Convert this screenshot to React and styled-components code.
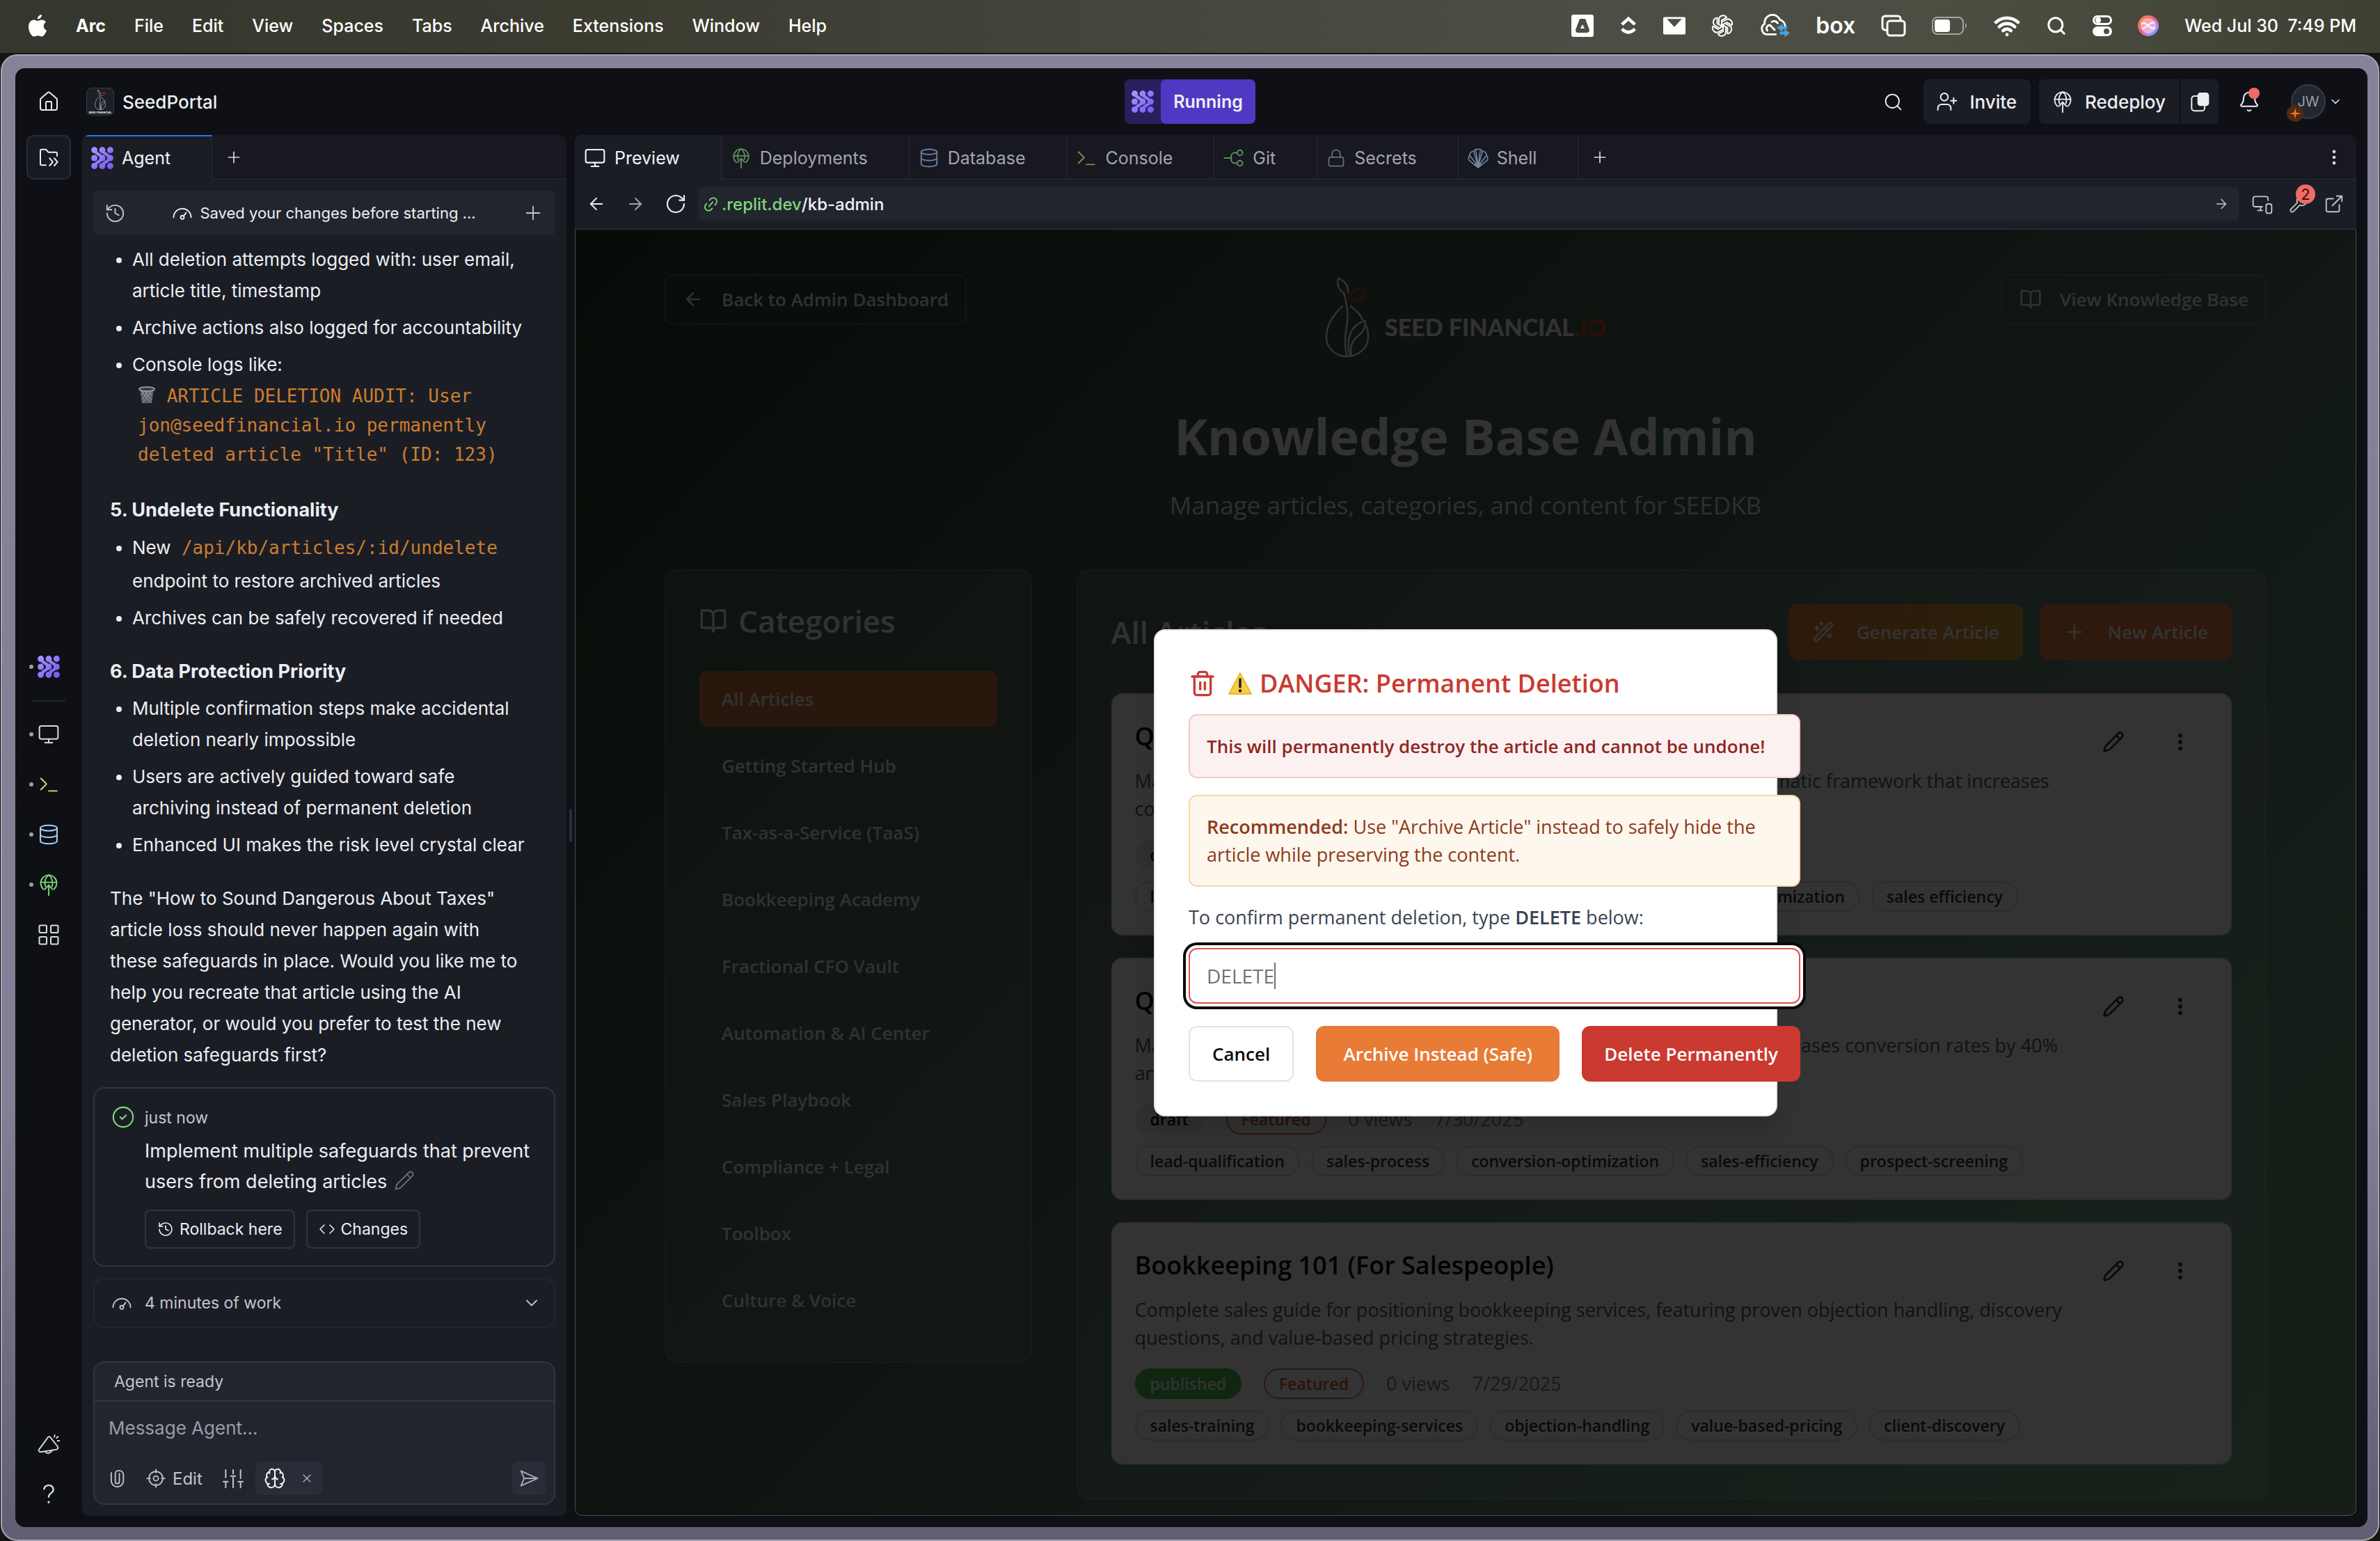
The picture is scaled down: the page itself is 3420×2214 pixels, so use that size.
import React from "react";
import styled, { createGlobalStyle, css } from "styled-components";
import {
  House, Search, UserPlus, Bell, ChevronDown, Plus, EllipsisVertical, ArrowLeft, ArrowRight,
  RotateCw, Link2, MonitorSmartphone, Wrench, ExternalLink, Monitor, Database, Lock, History,
  Pencil, Brain, X, Trash2, BookOpen, WandSparkles, LayoutGrid, Wifi, CircleCheck,
} from "lucide-react";

const ui = `Inter, "Liberation Sans", sans-serif`;
const page = `"Open Sans", "Noto Sans", sans-serif`;
const mono = `"DejaVu Sans Mono", "Liberation Mono", monospace`;

const Global = createGlobalStyle`
  *, *::before, *::after { box-sizing: border-box; }
  body { margin: 0; background: #15160f; font-family: ${ui}; -webkit-font-smoothing: antialiased; }
  button, input, textarea { font: inherit; color: inherit; background: none; border: 0; padding: 0; margin: 0; outline: 0; }
  button { cursor: pointer; display: inline-flex; align-items: center; justify-content: center; white-space: nowrap; }
  svg { display: block; flex: none; }
  h1, h2, h3, p, ul { margin: 0; padding: 0; font-weight: inherit; font-size: inherit; }
  a { color: inherit; text-decoration: none; }
`;

/* ---------- drawings ---------- */

const AgentMark = ({ size = 32 }) => (
  <svg width={size} height={size} viewBox="0 0 32 32" fill="url(#agentFill)" stroke="url(#agentFill)">
    <defs>
      <linearGradient id="agentFill" gradientUnits="userSpaceOnUse" x1="0" y1="0" x2="32" y2="32">
        <stop offset="0" stopColor="#a699ff" />
        <stop offset="1" stopColor="#7355f2" />
      </linearGradient>
    </defs>
    <g stroke="none">
      {[4.6, 16, 27.4].map((x) => [4.6, 16, 27.4].map((y) => <circle key={x + "-" + y} cx={x} cy={y} r="4.5" />))}
    </g>
    <path d="M5 5C8 12 12 9 16 16C12 23 8 20 5 27" fill="none" strokeWidth="4.500" />
    <path d="M16 5C19 12 23 9 27 16C23 23 19 20 16 27" fill="none" strokeWidth="4.500" />
  </svg>
);

const Line = ({ size = 28, w = 1.5, children, box = 24, ...rest }) => (
  <svg width={size} height={size} viewBox={`0 0 ${box} ${box}`} fill="none" stroke="currentColor" strokeWidth={w}
    strokeLinecap="round" strokeLinejoin="round" {...rest}>{children}</svg>
);

const FolderOut = () => (
  <Line size={32}>
    <path d="M9 20.5H4.5A1.5 1.5 0 0 1 3 19V5a1.5 1.5 0 0 1 1.500-1.500H9l2.500 3H19.500A1.500 1.500 0 0 1 21 8v2.500" />
    <path d="m13 13 3.500 4-3.500 4M18 13l3.500 4-3.500 4" />
  </Line>
);
const Gauge = ({ size = 28 }) => (
  <Line size={size}><path d="M2 17a10 10 0 0 1 20 0" /><circle cx="12" cy="17" r="2" /><path d="m13.500 15.500 3-4" /></Line>
);
const GlobeUp = ({ size = 30, w = 1.4 }) => (
  <Line size={size} w={w}>
    <path d="M6.500 17A8.600 8.600 0 1 1 17.500 17" /><path d="M3.500 9.500h17" />
    <path d="M8.500 14C7 9.500 8.500 4 12 1.500C15.500 4 17 9.500 15.500 14" /><path d="M12 12.500V23.500M8 17l4-4.500 4 4.500" />
  </Line>
);
const Prompt = ({ size = 30 }) => (
  <Line size={size}><path d="m3 5 6.500 6.500L3 18M12 19.500h9.500" /></Line>
);
const GitMark = () => (
  <Line size={30}>
    <path d="M1 12h8M16 6h-3a4 4 0 0 0-4 4v4a4 4 0 0 0 4 4h3" /><circle cx="19" cy="6" r="3" /><circle cx="19" cy="18" r="3" />
  </Line>
);
const ShellMark = () => (
  <Line size={30} w={1.3}>
    <path d="M12 23 1.500 14.500C.500 12 1 10 2.500 9.500C2 6 4.500 4 7 4.500C8 1 16 1 17 4.500C19.500 4 22 6 21.500 9.500C23 10 23.500 12 22.500 14.500Z" />
    <path d="M12 21 2.500 9.500M12 21 7 4.500M12 21 9.500 4M12 21l2.500-17M12 21l5-16.500M12 21l9.500-11.500" />
    <path d="m8 19.500 4 3.500 4-3.500-4-2z" fill="currentColor" />
  </Line>
);
const Target = () => (
  <Line size={28}><circle cx="12" cy="12" r="8.500" /><circle cx="12" cy="12" r="3" /><path d="M12 1v4M12 19v4M1 12h4M19 12h4" /></Line>
);
const Clip = () => (
  <Line size={28} w={1.6}><path d="M15 6v10a2.500 2.500 0 0 1-5 0V6.500a4 4 0 0 1 4-4h1a5 5 0 0 1 5 5V15a7.500 7.500 0 0 1-15 0V5" /></Line>
);
const Faders = () => (
  <Line size={32}><path d="M4 3v8M4 16v6M1.500 15.500h5M12 3v4M12 11v11M9.500 9.500h5M20 3v9M20 17v5M17.500 15.500h5" /></Line>
);
const SendMark = () => <Line size={30}><path d="M3 3.500 22 12 3 20.500 6.500 12ZM6.500 12H22" /></Line>;
const Angles = () => <Line size={24}><path d="m8 6-6 6 6 6M16 6l6 6-6 6" /></Line>;
const Horn = () => (
  <Line size={32} w={1.4}>
    <path d="M1.500 18.500 11 5.500q1.500-2 3 0L21.500 15q1.500 3-1.500 3.500L4 21q-3.500.300-2.500-2.500Z" /><path d="M8 20.500q3 4.500 8-1.300" />
    <path d="M18.500 3 18 5M22 4.500 20.500 6M23.500 9h-2" />
  </Line>
);
const Question = () => (
  <Line size={32} w={1.8}><path d="M7 7a5 4.500 0 1 1 8 4c-2 1.200-3 2-3 4.500" /><path d="M12 21v.200" strokeWidth="2.400" /></Line>
);
const CopyMark = () => (
  <Line size={32}>
    <path d="M10 6H7a3 3 0 0 0-3 3v10a3 3 0 0 0 3 3h8a3 3 0 0 0 3-3v-3" />
    <rect x="11" y="3" width="11" height="13" rx="2.500" fill="currentColor" />
  </Line>
);
const SeedMark = ({ width, height, ink = "#fafafa", leaf = "#d04a26" }) => (
  <svg width={width} height={height} viewBox="0 0 64 116" fill="none" stroke={ink} strokeWidth="2.600" strokeLinecap="round" strokeLinejoin="round">
    <path d="M19 2C17 11 20 19 27 23C31 36 34 55 31 72C28 88 29 103 31 113" />
    <path d="M19 2C28 5 34 13 33 22" />
    <path d="M25 42C12 54 2 68 2 86C2 103 16 114 31 114C47 114 62 103 62 86C62 79 61 74 59 70" />
    <path d="M37 42C45 48 51 54 54 61" />
    <path d="M36 113C33 104 33 94 35 86C38 74 46 66 58 63C58 77 52 81 45 87C38 93 36 103 38 113" />
    <path stroke={leaf} d="M34 32C36 21 46 16 58 16C57 29 49 37 37 34" />
  </svg>
);
const TrashCan = () => (
  <svg width="26" height="26" viewBox="0 0 26 26">
    <path d="M3 4h20l-3 20a16 4 0 0 1-14 0z" fill="#5c6066" />
    <path d="M5 6l14 18M9 5l11 15M14 5l7 9M21 6L7 24M17 5L6 19M12 5L5 13" stroke="#9aa0a8" strokeWidth="1" />
    <ellipse cx="13" cy="4" rx="11" ry="3" fill="#3b3e43" stroke="#a4a9b0" strokeWidth="1.500" />
  </svg>
);
const Warning = () => (
  <svg width="36" height="34" viewBox="0 0 36 34">
    <path d="M18 2 34 32H2Z" fill="#f7cf46" stroke="#e9b92f" strokeWidth="2" strokeLinejoin="round" />
    <path d="M18 11v11" stroke="#222" strokeWidth="3.600" strokeLinecap="round" /><circle cx="18" cy="27.500" r="2.200" fill="#222" />
  </svg>
);

/* ---------- menu bar ---------- */

const Desktop = styled.div`
  min-height: 100vh; display: flex; flex-direction: column; color: #eceef2;
`;
const MenuBar = styled.nav`
  height: 76px; flex: none; display: flex; align-items: center; justify-content: space-between; padding: 0 34px 2px 40px;
  background: linear-gradient(90deg, #34372e, #3b3b30 25%, #4c4e45 66%, #4c4e42 82%, #3e4034);
  font-size: 25px; font-weight: 500; color: #fff;
`;
const MenuGroup = styled.div`display: flex; align-items: center; gap: ${(p) => p.$gap}px;`;
const MenuItem = styled.button`font-weight: ${(p) => (p.$app ? 700 : 500)};`;
const Clock = styled.span`white-space: pre;`;
const BoxWord = styled.span`font-size: 32px; font-weight: 600; line-height: 32px;`;

const Tray = () => (
  <MenuGroup $gap={37}>
    <svg width="32" height="32" viewBox="0 0 32 32"><path fillRule="evenodd" fill="#fff" d="M3 0h26a3 3 0 0 1 3 3v26a3 3 0 0 1-3 3H3a3 3 0 0 1-3-3V3a3 3 0 0 1 3-3Zm9 6L6 22q0 4 4 4h12q4 0 4-4L20 6Zm4 8 3 6h-6Z" /></svg>
    <svg width="26" height="30" viewBox="0 0 28 30" fill="none" stroke="#fff" strokeWidth="5"><path d="m4 13 10-9 10 9M4 20q10 10 20 0" /></svg>
    <svg width="32" height="26" viewBox="0 0 36 28"><path fill="#fff" d="M2 0h32a2 2 0 0 1 2 2v24a2 2 0 0 1-2 2H2a2 2 0 0 1-2-2V2a2 2 0 0 1 2-2Z" /><path fill="#4c4e45" d="M6 3h24L18 16Z" /></svg>
    <svg width="32" height="32" viewBox="0 0 32 32" fill="none" stroke="#fff" strokeWidth="2">
      {[0, 60, 120, 180, 240, 300].map((a) => <path key={a} transform={`rotate(${a} 16 16)`} d="M11 13V7a6 6 0 0 1 11-3l-7 4v10" />)}
    </svg>
    <svg width="44" height="34" viewBox="0 0 46 34" fill="none" stroke="#fff" strokeWidth="3">
      <path d="M10 30a9 9 0 0 1-2-16A12 12 0 0 1 31 8a11 11 0 0 1 8 10M10 30h16" /><path d="M24 24l-8-8a5 5 0 0 0-3 9M18 12a6 6 0 0 1 10 2" />
      <path d="m35 14-9 6 9 6v-4h7v-4h-7Z" fill="#4aa3df" stroke="none" /><path d="m38 22 8 6-8 6v-4h-7v-4h7Z" fill="#4aa3df" stroke="none" />
    </svg>
    <BoxWord>box</BoxWord>
    <svg width="36" height="32" viewBox="0 0 36 32" fill="none" stroke="#fff" strokeWidth="3"><path d="M8 22H6a4 4 0 0 1-4-4V6a4 4 0 0 1 4-4h18a4 4 0 0 1 4 4v2" /><rect x="9" y="9" width="25" height="21" rx="4" /></svg>
    <svg width="52" height="26" viewBox="0 0 52 26" fill="none"><rect x="1" y="1" width="44" height="24" rx="7" stroke="#a4a59d" strokeWidth="2" /><rect x="4" y="4" width="22" height="18" rx="4" fill="#fff" /><path d="M48 9q4 4 0 8" fill="#a4a59d" /></svg>
    <Wifi size={38} strokeWidth={3} />
    <Search size={30} strokeWidth={2.4} />
    <svg width="28" height="30" viewBox="0 0 28 30"><rect x="1.500" y="1.500" width="25" height="11" rx="5.500" fill="none" stroke="#fff" strokeWidth="3" /><circle cx="8" cy="7" r="4" fill="#fff" /><rect y="16" width="28" height="14" rx="7" fill="#fff" /><circle cx="20" cy="23" r="4" fill="#4c4e45" /></svg>
    <svg width="30" height="30" viewBox="0 0 30 30">
      <defs><linearGradient id="orb" x1="0" y1="0" x2="1" y2="1"><stop offset="0" stopColor="#ff9d2e" /><stop offset=".45" stopColor="#ee5a8c" /><stop offset=".7" stopColor="#b58af0" /><stop offset="1" stopColor="#3c9cf0" /></linearGradient></defs>
      <circle cx="15" cy="15" r="15" fill="url(#orb)" /><circle cx="15" cy="15" r="11" fill="#fff" opacity=".45" />
      <path d="M5 12c8-4 12 10 20 6M6 19C13 20 16 8 24 11" stroke="#fff" strokeWidth="2" fill="none" />
    </svg>
    <Clock>Wed Jul 30  7:49 PM</Clock>
  </MenuGroup>
);

/* ---------- window ---------- */

const Window = styled.div`
  flex: 1; display: flex; margin: 2px 1px 0; padding: 18px 15px 18px 19px; border: 2px solid #a5a4b6; border-radius: 24px;
  background: linear-gradient(180deg, #84839a, #827f96 70%, #615e74);
`;
const Workspace = styled.div`
  flex: 1; min-width: 0; display: flex; flex-direction: column; border-radius: 14px; background: #0e1015; overflow: hidden;
`;
const TopBar = styled.header`
  height: 96px; flex: none; display: grid; grid-template-columns: 1fr auto 1fr; align-items: center; padding: 0 36px 0 32px; font-size: 26px; font-weight: 500;
`;
const TopLeft = styled.div`display: flex; align-items: center; gap: 12px;`;
const HomeButton = styled.button`width: 32px; margin-right: 26px;`;
const RepoLogo = styled.span`
  width: 40px; height: 40px; border: 1px solid #3a3d46; border-radius: 8px; background: #1d1f26; display: grid; place-items: center; align-content: center;
`;
const RunGroup = styled.div`display: flex; border-radius: 8px; background: #291f5e; height: 64px;`;
const RunIcon = styled.span`width: 52px; display: grid; place-items: center;`;
const RunButton = styled.button`background: #5038c4; border-radius: 8px; padding: 0 18px; font-size: 25px; font-weight: 600;`;
const TopRight = styled.div`display: flex; align-items: center; justify-content: flex-end; gap: 12px;`;
const Ghost = styled.button`width: 64px; height: 64px; position: relative;`;
const Solid = styled.button`
  height: 64px; background: #1b1d25; border-radius: 8px; padding: 0 20px 0 18px; gap: 16px;
`;
const Split = styled.div`
  display: flex; border-radius: 8px; overflow: hidden;
  ${Solid} { border-radius: 0; }
  ${Solid} + ${Solid} { border-left: 2px solid #0e1015; padding: 0 12px 0 10px; }
`;
const Alert = styled.span`position: absolute; right: 17px; top: 12px; width: 16px; height: 16px; border-radius: 50%; background: #f06b66;`;
const Account = styled.button`gap: 4px; margin-left: 16px;`;
const Avatar = styled.span`
  position: relative; width: 50px; height: 50px; border-radius: 50%; background: #23262f; border: 2px solid #363a44;
  display: grid; place-items: center; color: #9a9ea8; font-size: 20px; font-weight: 400;
`;
const Spark = styled.span`
  position: absolute; left: -8px; bottom: -6px; width: 24px; height: 24px; border-radius: 50%; background: #4e2a12; display: grid; place-items: center;
`;

const Body = styled.div`flex: 1; min-height: 0; display: flex; padding: 0 16px 16px 0;`;
const Rail = styled.nav`width: 96px; flex: none; display: flex; flex-direction: column; align-items: center; justify-content: space-between;`;
const RailGroup = styled.div`display: flex; flex-direction: column; align-items: center; gap: 8px; width: 100%;`;
const RailFolder = styled.button`width: 64px; height: 64px; border: 2px solid #2b2b38; border-radius: 10px; background: #181a22;`;
const RailItem = styled.button`
  width: 96px; height: 64px; position: relative; color: ${(p) => p.$tint || "#d5d8de"};
  &::before { content: ""; display: ${(p) => (p.$dot ? "block" : "none")}; position: absolute; left: 20px; width: 6px; height: 6px; border-radius: 50%; background: #9a9ea8; }
`;
const RailRule = styled.hr`width: 48px; height: 2px; border: 0; margin: 8px 0 7px; background: #23262f;`;

const Panel = styled.section`
  display: flex; flex-direction: column; background: #1b1d25; border-radius: 10px; overflow: hidden; min-width: 0;
  ${(p) => (p.$wide ? css`flex: 1;` : css`width: 696px; flex: none;`)}
`;
const Splitter = styled.div`
  width: 12px; flex: none; display: grid; place-items: center;
  &::before { content: ""; width: 4px; height: 48px; border-radius: 2px; background: #2a2d36; }
`;
const TabBar = styled.div`height: 64px; flex: none; display: flex; background: #181820;`;
const Tab = styled.button`
  justify-content: flex-start; gap: 12px; padding: 0 59px 0 13px; font-size: 25px; font-weight: 400;
  color: ${(p) => (p.$on ? "#f1f2f4" : "#a2a5ae")};
  border-top: 2px solid ${(p) => (p.$accent ? "#2f75ef" : "transparent")};
  border-bottom: 1px solid ${(p) => (p.$on ? "transparent" : "#2a2a36")};
  border-right: 1px solid #2a2a36;
  ${(p) => p.$on && css`background: #1b1d25;`}
`;
const TabTint = styled.span`color: ${(p) => p.$c}; opacity: ${(p) => (p.$dim ? 0.65 : 1)};`;
const TabRest = styled.div`
  flex: 1; display: flex; align-items: center; justify-content: space-between; padding: 0 18px; border-bottom: 1px solid #2a2a36; color: #d5d8de;
`;

/* ---------- agent panel ---------- */

const AgentBody = styled.div`flex: 1; min-height: 0; display: flex; flex-direction: column; padding: 16px;`;
const StatusBar = styled.div`
  height: 64px; flex: none; display: flex; align-items: center; justify-content: space-between; padding: 0 16px;
  background: #22252e; border-radius: 8px; font-size: 22px; color: #c2c5cc;
`;
const StatusText = styled.span`display: flex; align-items: center; gap: 10px; color: #eceef2;`;
const Chat = styled.div`
  padding: 12px 40px 24px 24px; font-size: 26px; line-height: 45px; display: flex; flex-direction: column; gap: 8px;
`;
const Bullets = styled.ul`
  list-style: disc; padding-left: 32px; margin-bottom: 24px; display: flex; flex-direction: column; gap: 8px;
`;
const ChatHeading = styled.h3`font-size: 27px; font-weight: 700;`;
const CodeBlock = styled.code`
  display: block; font: 26px/42px ${mono}; color: #ca7d30; padding: 2px 8px 4px;
  svg { display: inline-block; vertical-align: -3px; }
`;
const CodeInline = styled.code`display: inline-block; font: 26px/45px ${mono}; color: #ca7d30; padding: 2px 8px;`;
const Checkpoint = styled.article`
  display: grid; grid-template-columns: 30px 1fr; column-gap: 18px; padding: 20px 24px 24px; border: 2px solid #2b3839; border-radius: 16px;
  font-size: 27px; line-height: 44px;
`;
const When = styled.span`font-size: 23px; color: #c2c5cc;`;
const CheckBody = styled.div`display: flex; flex-direction: column;`;
const Summary = styled.p`margin: 4px -20px 18px 0; svg { display: inline-block; vertical-align: -4px; margin-left: 10px; }`;
const Row = styled.div`display: flex; gap: ${(p) => p.$gap || 16}px; align-items: center;`;
const Outline = styled.button`height: 56px; border: 2px solid #2b3839; border-radius: 8px; padding: 0 16px; gap: 8px; font-size: 23px;`;
const Work = styled.button`
  justify-content: flex-start; gap: 18px; height: 72px; flex: none; margin-top: 16px; padding: 0 18px 0 24px; border: 2px solid #23262f; border-radius: 16px;
  font-size: 23px; color: #c2c5cc; svg:last-child { margin-left: auto; }
`;
const Composer = styled.form`
  margin-top: auto; flex: none; background: #22252e; border: 2px solid #33363f; border-radius: 16px; color: #c2c5cc; display: flex; flex-direction: column;
`;
const Ready = styled.div`padding: 0 28px; font-size: 23px; line-height: 54px; border-bottom: 2px solid #33363f;`;
const Message = styled.textarea`
  resize: none; height: 80px; padding: 18px 20px; font-size: 26px; line-height: 40px; &::placeholder { color: #989ca6; opacity: 1; }
`;
const Tools = styled.div`display: flex; align-items: center; padding: 6px 12px 12px 18px; gap: 28px; height: 66px; font-size: 24px;`;
const Tool = styled.button`gap: 10px;`;
const Chip = styled.span`
  display: flex; align-items: center; justify-content: center; gap: 20px; height: 48px; width: 96px; border-radius: 8px; background: #2a2d37; margin-left: -12px; color: #f1f2f4;
`;
const Send = styled.button`width: 48px; height: 48px; border-radius: 8px; background: #2a2d37; margin-left: auto; color: #a9adb6;`;

/* ---------- browser panel ---------- */

const AddressRow = styled.div`
  height: 72px; flex: none; display: flex; align-items: center; gap: 28px; padding: 0 17px; border-bottom: 2px solid #282b34;
`;
const Address = styled.div`
  flex: 1; height: 48px; display: flex; align-items: center; padding: 0 14px 0 6px; margin: 0 -10px 0 -12px; border-radius: 6px; background: #22252e; font-size: 24px; font-weight: 500;
  color: #f1f2f4;
  label { display: flex; align-items: center; gap: 3px; color: #7fd67a; }
  input { flex: 1; }
`;
const Badged = styled.button`position: relative;`;
const Count = styled.span`
  position: absolute; left: 10px; top: -14px; width: 28px; height: 28px; border-radius: 50%; background: #f06b66; color: #3d0d0b; font-size: 22px; line-height: 28px;
`;
const Viewport = styled.div`
  position: relative; flex: 1; display: flex; flex-direction: column; border: 1px solid #484b50; border-top: 0; border-radius: 0 0 10px 10px; overflow: hidden;
`;
const Site = styled.main`
  flex: 1; padding: 64px 128px 20px; font-family: ${page}; color: #fafafa;
  background: linear-gradient(135deg, #283c2d, #425a48 28%, #4a6858 48%, #587e6a 65%, #669474 85%, #6e9c72);
`;
const SiteTop = styled.div`display: grid; grid-template-columns: 1fr auto 1fr; align-items: start; & > :last-child { justify-self: end; } & > :first-child { justify-self: start; }`;
const SiteLink = styled.a`
  display: flex; align-items: center; height: 72px; padding: 0 24px; gap: 26px; border: 2px solid rgba(255, 255, 255, 0.18); border-radius: 12px;
  font-size: 26px; font-weight: 600; color: #f4f4f4; white-space: nowrap;
`;
const Brand = styled.div`
  display: flex; align-items: center; gap: 22px; padding-top: 4px; font: 900 34px/40px Lato, sans-serif;
  span { padding-top: 28px; } b { color: #d04a26; font-weight: 900; }
`;
const Title = styled.h1`margin-top: 64px; text-align: center; font-size: 72px; line-height: 96px; font-weight: 700;`;
const Subtitle = styled.p`margin-top: 24px; text-align: center; font-size: 35px; line-height: 56px; color: rgba(255, 255, 255, 0.88);`;
const Columns = styled.div`margin-top: 64px; display: grid; grid-template-columns: repeat(4, 1fr); gap: 64px; align-items: start;`;
const Glass = styled.section`
  padding: 48px; border: 2px solid rgba(255, 255, 255, 0.14); border-radius: 18px; background: rgba(255, 255, 255, 0.1);
  ${(p) => p.$main && css`grid-column: span 3;`}
`;
const GlassTitle = styled.h2`display: flex; align-items: center; gap: 16px; font-size: 44px; line-height: 48px; font-weight: 600;`;
const CategoryList = styled.div`display: flex; flex-direction: column; gap: 16px; margin-top: 48px;`;
const Category = styled.button`
  height: 80px; padding: 0 32px; justify-content: flex-start; border-radius: 12px; font-size: 26px; font-weight: 600; color: #f4f4f4;
  ${(p) => p.$on && css`background: #cc7540;`}
`;
const ListHead = styled.div`display: flex; justify-content: space-between; align-items: center; margin-bottom: 48px;`;
const Action = styled.button`
  height: 80px; border-radius: 12px; padding: 0 34px; gap: 32px; font-size: 26px; font-weight: 600; color: #fff;
  background: ${(p) => (p.$gold ? "linear-gradient(90deg, #e97a3c, #d2a434)" : "#e97a3c")};
`;
const Cards = styled.div`display: flex; flex-direction: column; gap: 32px;`;
const Card = styled.article`
  display: flex; justify-content: space-between; gap: 16px; padding: 32px; border: 2px solid #e4e4e4; border-radius: 16px; background: #fcfcfc;
`;
const CardTitle = styled.h3`font-size: 36px; line-height: 56px; font-weight: 600; color: #020617;`;
const CardText = styled.p`margin: 16px 0 24px; font-size: 27px; line-height: 40px; color: #4f5a6e; white-space: pre-line;`;
const Meta = styled.div`display: flex; align-items: center; gap: 32px; margin-bottom: 16px; font-size: 27px; line-height: 40px; color: #78808f;`;
const Pill = styled.span`
  height: 44px; line-height: 40px; padding: 0 20px; border-radius: 22px; font-size: 23px; font-weight: 600; white-space: nowrap; border: 2px solid #dcdcdc; color: #30343c;
  ${(p) => p.$kind === "published" && css`background: #4fbd4c; border-color: #4fbd4c; color: #fafafa;`}
  ${(p) => p.$kind === "draft" && css`background: #f1f1f1; border-color: #f1f1f1; color: #0a0a0a;`}
  ${(p) => p.$kind === "featured" && css`border-color: #e97a3c; color: #d2601f;`}
`;
const IconButton = styled.button`width: 80px; height: 72px; color: #2a2d33;`;
const CardActions = styled.div`display: flex; gap: 16px;`;

/* ---------- dialog ---------- */

const Scrim = styled.div`position: absolute; inset: 0; display: grid; place-items: center; background: rgba(0, 0, 0, 0.8); font-family: ${page};`;
const Dialog = styled.div`
  width: 896px; padding: 48px; border: 2px solid #e4e4e4; border-radius: 16px; background: #fff; color: #3a4354; font-size: 27px; line-height: 40px;
  box-shadow: 0 20px 30px rgba(0, 0, 0, 0.15);
`;
const DialogBody = styled.div`width: 879px; display: flex; flex-direction: column; gap: 24px;`;
const DialogTitle = styled.h2`
  display: flex; align-items: center; gap: 16px; margin-bottom: -8px; font-size: 36px; line-height: 56px; font-weight: 600; color: #ca3a31;
  span { display: flex; align-items: center; gap: 10px; }
`;
const Note = styled.p`
  padding: 24px; border-radius: 12px; border: 2px solid #f8d7a8; background: #fef7ed; color: #8d3a1c;
  ${(p) => p.$danger && css`border-color: #f5c9c9; background: #fcf1f1; color: #8f2721; font-size: 26px; font-weight: 600;`}
  b { font-weight: 600; }
`;
const ConfirmLabel = styled.label`b { font-weight: 600; }`;
const Field = styled.div`
  height: 80px; display: flex; align-items: center; padding: 0 24px; border: 2px solid #dd524c; border-radius: 12px; background: #fff;
  box-shadow: 0 0 0 4px #fff, 0 0 0 8px #0a0a0a;
  input { field-sizing: content; color: #78716b; font-size: 28px; }
  &::after { content: ""; width: 2px; height: 38px; background: #78716b; }
`;
const DialogFoot = styled.div`display: flex; gap: 32px; padding-top: 8px;`;
const DialogButton = styled.button`
  height: 80px; border-radius: 12px; font-size: 26px; font-weight: 600; color: #fff; padding: 0 32px;
  ${(p) => p.$kind === "cancel" && css`border: 2px solid #e4e4e4; color: #0a0a0a;`}
  ${(p) => p.$kind === "safe" && css`flex: 1 0 auto; background: #e87b35;`}
  ${(p) => p.$kind === "danger" && css`background: #ca3a31;`}
`;

/* ---------- data ---------- */

const menus = ["File", "Edit", "View", "Spaces", "Tabs", "Archive", "Extensions", "Window", "Help"];
const categories = ["All Articles", "Getting Started Hub", "Tax-as-a-Service (TaaS)", "Bookkeeping Academy", "Fractional CFO Vault",
  "Automation & AI Center", "Sales Playbook", "Compliance + Legal", "Toolbox", "Culture & Voice"];
const tools = [
  ["Deployments", "#7fd67a", <GlobeUp />], ["Database", "#8fb8e8", <Database size={30} strokeWidth={1.5} />],
  ["Console", "#d9c45c", <Prompt />], ["Git", "#7fd67a", <GitMark />],
  ["Secrets", "#9a9ea8", <Lock size={28} strokeWidth={1.5} />], ["Shell", "#9fbfe6", <ShellMark />],
];
const articles = [
  { title: "Quality Lead Qualification", status: "draft", date: "7/30/2025",
    text: "Master the art of lead qualification for accounting prospects via our systematic framework that increases\nconversion rates and saves time.",
    tags: ["lead qualification", "sales process", "prospect screening", "conversion optimization", "sales efficiency"] },
  { title: "Quick Lead Qualification", status: "draft", date: "7/30/2025",
    text: "Master qualifying leads via a proven framework that shortens calls and increases conversion rates by 40%\nand saves time.",
    tags: ["lead-qualification", "sales-process", "conversion-optimization", "sales-efficiency", "prospect-screening"] },
  { title: "Bookkeeping 101 (For Salespeople)", status: "published", date: "7/29/2025",
    text: "Complete sales guide for positioning bookkeeping services, featuring proven objection handling, discovery\nquestions, and value-based pricing strategies.",
    tags: ["sales-training", "bookkeeping-services", "objection-handling", "value-based-pricing", "client-discovery"] },
];

/* ---------- sections ---------- */

const Header = () => (
  <TopBar>
    <TopLeft>
      <HomeButton aria-label="Home"><House size={32} strokeWidth={1.5} /></HomeButton>
      <RepoLogo>
        <SeedMark width={18} height={29} ink="#c9ccd2" leaf="#e0512c" />
        <svg width="38" height="6" viewBox="0 0 38 6"><text x="19" y="5" textAnchor="middle" fontSize="4" fontWeight="700" fill="#eceef2">SEED FINANCIAL</text></svg>
      </RepoLogo>
      SeedPortal
    </TopLeft>
    <RunGroup>
      <RunIcon><AgentMark size={32} /></RunIcon>
      <RunButton>Running</RunButton>
    </RunGroup>
    <TopRight>
      <Ghost aria-label="Search"><Search size={29} strokeWidth={1.6} /></Ghost>
      <Solid><UserPlus size={32} strokeWidth={1.5} />Invite</Solid>
      <Split>
        <Solid><GlobeUp size={32} />Redeploy</Solid>
        <Solid aria-label="Copy deployment"><CopyMark /></Solid>
      </Split>
      <Ghost aria-label="Notifications"><Bell size={32} strokeWidth={1.5} /><Alert /></Ghost>
      <Account aria-label="Account">
        <Avatar>JW
          <Spark><svg width="16" height="16" viewBox="0 0 16 16"><path d="M8 0 9.500 6.500 16 8 9.500 9.500 8 16 6.500 9.500 0 8 6.500 6.500Z" fill="#f0762c" /></svg></Spark>
        </Avatar>
        <ChevronDown size={20} strokeWidth={1.8} />
      </Account>
    </TopRight>
  </TopBar>
);

const SideRail = () => (
  <Rail>
    <RailFolder aria-label="Files"><FolderOut /></RailFolder>
    <RailGroup>
      <RailItem $dot aria-label="Agent"><AgentMark size={32} /></RailItem>
      <RailRule />
      <RailItem $dot aria-label="Preview"><Monitor size={32} strokeWidth={1.5} /></RailItem>
      <RailItem $dot $tint="#ecd96a" aria-label="Console"><Prompt /></RailItem>
      <RailItem $dot $tint="#a9cdf5" aria-label="Database"><Database size={32} strokeWidth={1.5} /></RailItem>
      <RailItem $dot $tint="#7fd67a" aria-label="Deployments"><GlobeUp size={32} /></RailItem>
      <RailItem aria-label="All tools"><LayoutGrid size={36} strokeWidth={1.4} /></RailItem>
    </RailGroup>
    <RailGroup>
      <RailItem aria-label="News"><Horn /></RailItem>
      <RailItem aria-label="Help"><Question /></RailItem>
    </RailGroup>
  </Rail>
);

const AgentPanel = () => (
  <Panel>
    <TabBar>
      <Tab $on $accent><AgentMark size={32} />Agent</Tab>
      <TabRest><button aria-label="New tab"><Plus size={26} strokeWidth={1.6} /></button></TabRest>
    </TabBar>
    <AgentBody>
      <StatusBar>
        <button aria-label="History"><History size={31} strokeWidth={1.5} /></button>
        <StatusText><Gauge size={30} />Saved your changes before starting ...</StatusText>
        <button aria-label="New chat"><Plus size={32} strokeWidth={1.4} /></button>
      </StatusBar>
      <Chat>
        <Bullets>
          <li>All deletion attempts logged with: user email, article title, timestamp</li>
          <li>Archive actions also logged for accountability</li>
          <li>Console logs like:
            <CodeBlock><TrashCan /> ARTICLE DELETION AUDIT: User jon@seedfinancial.io permanently deleted article "Title" (ID: 123)</CodeBlock>
          </li>
        </Bullets>
        <ChatHeading>5. Undelete Functionality</ChatHeading>
        <Bullets>
          <li>New <CodeInline>/api/kb/articles/:id/undelete</CodeInline> endpoint to restore archived articles</li>
          <li>Archives can be safely recovered if needed</li>
        </Bullets>
        <ChatHeading>6. Data Protection Priority</ChatHeading>
        <Bullets>
          <li>Multiple confirmation steps make accidental deletion nearly impossible</li>
          <li>Users are actively guided toward safe archiving instead of permanent deletion</li>
          <li>Enhanced UI makes the risk level crystal clear</li>
        </Bullets>
        <p>The "How to Sound Dangerous About Taxes" article loss should never happen again with these safeguards in place. Would you like me to help you recreate that article using the AI generator, or would you prefer to test the new deletion safeguards first?</p>
      </Chat>
      <Checkpoint>
        <TabTint $c="#7fd67a"><CircleCheck size={34} strokeWidth={1.5} style={{ marginTop: 4 }} /></TabTint>
        <CheckBody>
          <When>just now</When>
          <Summary>Implement multiple safeguards that prevent users from deleting articles<Pencil size={30} strokeWidth={1.4} color="#6c707a" /></Summary>
          <Row>
            <Outline><History size={24} strokeWidth={1.6} />Rollback here</Outline>
            <Outline><Angles />Changes</Outline>
          </Row>
        </CheckBody>
      </Checkpoint>
      <Work><Gauge size={30} />4 minutes of work<ChevronDown size={28} strokeWidth={1.6} /></Work>
      <Composer>
        <Ready>Agent is ready</Ready>
        <Message placeholder="Message Agent..." aria-label="Message Agent" />
        <Tools>
          <Tool type="button" aria-label="Attach"><Clip /></Tool>
          <Tool type="button"><Target />Edit</Tool>
          <Tool type="button" aria-label="Settings"><Faders /></Tool>
          <Chip><Brain size={32} strokeWidth={1.5} /><X size={20} strokeWidth={1.6} color="#a9adb6" /></Chip>
          <Send type="button" aria-label="Send"><SendMark /></Send>
        </Tools>
      </Composer>
    </AgentBody>
  </Panel>
);

const ArticleCard = ({ title, text, status, date, tags }) => (
  <Card>
    <div>
      <CardTitle>{title}</CardTitle>
      <CardText>{text}</CardText>
      <Meta><Pill $kind={status}>{status}</Pill><Pill $kind="featured">Featured</Pill><span>0 views</span><span>{date}</span></Meta>
      <Row>{tags.map((t) => <Pill key={t}>{t}</Pill>)}</Row>
    </div>
    <CardActions>
      <IconButton aria-label={"Edit " + title}><Pencil size={32} /></IconButton>
      <IconButton aria-label={"More for " + title}><EllipsisVertical size={32} strokeWidth={2.4} /></IconButton>
    </CardActions>
  </Card>
);

const KnowledgeBase = () => (
  <Site>
    <SiteTop>
      <SiteLink href="#admin"><ArrowLeft size={30} />Back to Admin Dashboard</SiteLink>
      <Brand><SeedMark width={64} height={116} /><span>SEED FINANCIAL<b>.IO</b></span></Brand>
      <SiteLink href="#kb"><BookOpen size={32} />View Knowledge Base</SiteLink>
    </SiteTop>
    <Title>Knowledge Base Admin</Title>
    <Subtitle>Manage articles, categories, and content for SEEDKB</Subtitle>
    <Columns>
      <Glass>
        <GlassTitle><BookOpen size={40} />Categories</GlassTitle>
        <CategoryList>{categories.map((c, i) => <Category key={c} $on={i === 0}>{c}</Category>)}</CategoryList>
      </Glass>
      <Glass $main>
        <ListHead>
          <GlassTitle>All Articles</GlassTitle>
          <Row $gap={24}>
            <Action $gold><WandSparkles size={32} />Generate Article</Action>
            <Action><Plus size={32} />New Article</Action>
          </Row>
        </ListHead>
        <Cards>{articles.map((a) => <ArticleCard key={a.title} {...a} />)}</Cards>
      </Glass>
    </Columns>
  </Site>
);

const DeleteDialog = () => (
  <Scrim>
    <Dialog role="dialog" aria-labelledby="delete-title">
      <DialogBody>
        <DialogTitle id="delete-title"><Trash2 size={40} /><span><Warning />DANGER: Permanent Deletion</span></DialogTitle>
        <Note $danger>This will permanently destroy the article and cannot be undone!</Note>
        <Note><b>Recommended:</b> Use "Archive Article" instead to safely hide the article while preserving the content.</Note>
        <ConfirmLabel htmlFor="confirm">To confirm permanent deletion, type <b>DELETE</b> below:</ConfirmLabel>
        <Field><input id="confirm" defaultValue="DELETE" /></Field>
        <DialogFoot>
          <DialogButton $kind="cancel">Cancel</DialogButton>
          <DialogButton $kind="safe">Archive Instead (Safe)</DialogButton>
          <DialogButton $kind="danger">Delete Permanently</DialogButton>
        </DialogFoot>
      </DialogBody>
    </Dialog>
  </Scrim>
);

const BrowserPanel = () => (
  <Panel $wide>
    <TabBar>
      <Tab $on><Monitor size={32} strokeWidth={1.6} />Preview</Tab>
      {tools.map(([name, tint, icon]) => <Tab key={name}><TabTint $c={tint} $dim>{icon}</TabTint>{name}</Tab>)}
      <TabRest>
        <button aria-label="New tab"><Plus size={26} strokeWidth={1.6} /></button>
        <button aria-label="Pane menu"><EllipsisVertical size={28} strokeWidth={2} /></button>
      </TabRest>
    </TabBar>
    <AddressRow>
      <button aria-label="Back"><ArrowLeft size={28} strokeWidth={1.7} /></button>
      <button aria-label="Forward"><ArrowRight size={28} strokeWidth={1.7} color="#a2a5ae" /></button>
      <button aria-label="Reload"><RotateCw size={32} strokeWidth={1.6} /></button>
      <Address>
        <label htmlFor="path"><Link2 size={25} strokeWidth={1.7} style={{ rotate: "-50deg" }} />.replit.dev</label>
        <input id="path" defaultValue="/kb-admin" />
        <button aria-label="Go"><ArrowRight size={22} strokeWidth={1.6} color="#c2c5cc" /></button>
      </Address>
      <Row $gap={22}>
        <button aria-label="Device size"><MonitorSmartphone size={32} strokeWidth={1.4} color="#c2c5cc" /></button>
        <Badged aria-label="Developer tools"><Wrench size={28} strokeWidth={1.6} color="#c2c5cc" /><Count>2</Count></Badged>
        <button aria-label="Open in new tab"><ExternalLink size={30} strokeWidth={1.5} color="#c2c5cc" /></button>
      </Row>
    </AddressRow>
    <Viewport>
      <KnowledgeBase />
      <DeleteDialog />
    </Viewport>
  </Panel>
);

export default function App() {
  return (
    <Desktop>
      <Global />
      <MenuBar>
        <MenuGroup $gap={41}>
          <svg width="28" height="34" viewBox="0 0 28 34" fill="#fff">
            <path d="M20 1c.300 3-2.500 6.500-6 6.500C13.500 4 17 1.200 20 1Z" />
            <path d="M14 10c2 0 3.500-1.600 6.200-1.600 2.400 0 4.600 1.300 5.900 3.400-5 3-4 10 .900 12-1.200 3.500-4 8.700-7 8.700-2 0-3-1.200-5.400-1.200S11 32.500 9 32.500C5 32.500 1 25 1 18.500S5 8.500 8.500 8.500C11 8.500 12.500 10 14 10Z" />
          </svg>
          <MenuItem $app>Arc</MenuItem>
          {menus.map((m) => <MenuItem key={m}>{m}</MenuItem>)}
        </MenuGroup>
        <Tray />
      </MenuBar>
      <Window>
        <Workspace>
          <Header />
          <Body>
            <SideRail />
            <AgentPanel />
            <Splitter />
            <BrowserPanel />
          </Body>
        </Workspace>
      </Window>
    </Desktop>
  );
}
